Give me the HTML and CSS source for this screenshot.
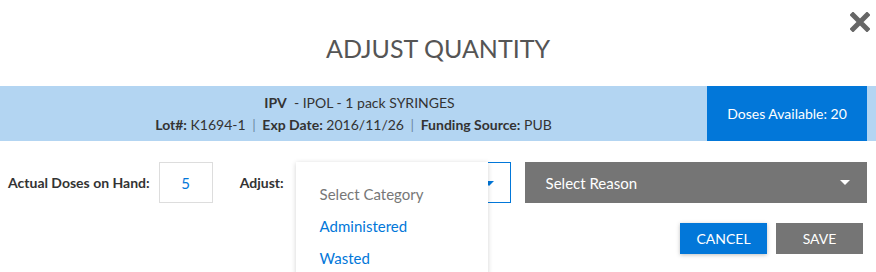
FILE: index.html
```html
<!DOCTYPE html>
<html lang="en">
<head>
  <meta charset="UTF-8">
  <meta name="viewport" content="width=device-width, initial-scale=1.0">
  <title>Adjust Quantity</title>
  <link rel="stylesheet" href="styles.css">
</head>
<body>
  <div class="modal">
    <header class="modal-header">
      <h1 class="modal-title">ADJUST QUANTITY</h1>
      <button class="close-button" aria-label="Close">
        <svg width="20" height="20" viewBox="0 0 20 20">
          <path d="M3 3 L17 17 M17 3 L3 17" stroke="#666" stroke-width="5" stroke-linecap="square"/>
        </svg>
      </button>
    </header>

    <div class="info-band">
      <div class="info-text">
        <div class="info-line first"><b>IPV</b>&nbsp; - IPOL - 1 pack SYRINGES</div>
        <div class="info-line">
          <b>Lot#:</b> K1694-1 <span class="sep">|</span>
          <b>Exp Date:</b> 2016/11/26 <span class="sep">|</span>
          <b>Funding Source:</b> PUB
        </div>
      </div>
      <div class="doses-box">Doses Available: 20</div>
    </div>

    <div class="form-row">
      <label class="field-label">Actual Doses on Hand:</label>
      <div class="qty-input">5</div>
      <label class="field-label adjust-label">Adjust:</label>
      <div class="category-select">
        <span class="caret caret-blue"></span>
        <ul class="dropdown-menu">
          <li class="dropdown-item placeholder">Select Category</li>
          <li class="dropdown-item">Administered</li>
          <li class="dropdown-item">Wasted</li>
        </ul>
      </div>
      <div class="reason-select">
        <span>Select Reason</span>
        <span class="caret"></span>
      </div>
    </div>

    <div class="actions">
      <button class="btn btn-primary">CANCEL</button>
      <button class="btn btn-gray">SAVE</button>
    </div>
  </div>
</body>
</html>
```

FILE: styles.css
```css
:root {
  --blue: #0277d9;
  --blue-light: #b3d5f2;
  --gray: #757575;
  --text-primary: #333333;
  --text-title: #555555;
  --border-light: #dddddd;
}

* {
  margin: 0;
  padding: 0;
  box-sizing: border-box;
  font-family: Lato, "Open Sans", sans-serif;
}

body {
  background: #ffffff;
  color: var(--text-primary);
  overflow: hidden;
}

.modal {
  width: 876px;
  height: 272px;
}

.modal-header {
  position: relative;
  padding: 35px 0 25px;
  text-align: center;
}

.modal-title {
  font-size: 25px;
  font-weight: 400;
  line-height: 26px;
  color: var(--text-title);
}

.close-button {
  position: absolute;
  top: 12px;
  right: 6px;
  width: 20px;
  height: 20px;
  border: none;
  background: none;
  cursor: pointer;
}

.close-button svg {
  display: block;
}

.info-band {
  display: flex;
  height: 55px;
  background: var(--blue-light);
  padding-right: 9px;
}

.info-text {
  flex: 1;
  display: flex;
  flex-direction: column;
  justify-content: center;
  align-items: center;
  font-size: 14px;
}

.info-line {
  line-height: 22px;
}

.info-line.first {
  padding-left: 12px;
}

.sep {
  color: #6d8aa3;
  margin: 0 3px;
}

.doses-box {
  width: 160px;
  background: var(--blue);
  color: #ffffff;
  font-size: 14px;
  display: flex;
  align-items: center;
  justify-content: center;
}

.form-row {
  display: flex;
  align-items: center;
  padding: 21px 9px 0 8px;
}

.field-label {
  font-size: 14px;
  font-weight: 700;
  margin-right: 9px;
}

.adjust-label {
  margin-right: 12px;
}

.qty-input {
  width: 54px;
  height: 41px;
  border: 1px solid var(--border-light);
  color: var(--blue);
  font-size: 15px;
  display: flex;
  align-items: center;
  justify-content: center;
  margin-right: 27px;
}

.category-select {
  position: relative;
  width: 215px;
  height: 41px;
  border: 1px solid var(--blue);
  margin-right: 14px;
}

.caret {
  width: 0;
  height: 0;
  border-left: 5px solid transparent;
  border-right: 5px solid transparent;
  border-top: 5px solid #ffffff;
}

.caret-blue {
  position: absolute;
  right: 16px;
  top: 18px;
  border-top-color: var(--blue);
}

.dropdown-menu {
  position: absolute;
  top: -1px;
  left: -1px;
  width: 192px;
  height: 112px;
  background: #ffffff;
  list-style: none;
  padding-top: 16px;
  box-shadow: 0 1px 5px rgba(0, 0, 0, 0.18);
  overflow: hidden;
}

.dropdown-item {
  height: 32px;
  line-height: 32px;
  padding-left: 24px;
  font-size: 15px;
  color: var(--blue);
}

.dropdown-item.placeholder {
  color: #777777;
}

.reason-select {
  flex: 1;
  height: 41px;
  background: var(--gray);
  color: #ffffff;
  font-size: 15px;
  display: flex;
  align-items: center;
  justify-content: space-between;
  padding: 0 17px 0 21px;
}

.actions {
  display: flex;
  justify-content: flex-end;
  gap: 9px;
  padding: 20px 13px 0 0;
}

.btn {
  width: 87px;
  height: 31px;
  border: none;
  color: #ffffff;
  font-size: 14px;
  cursor: pointer;
}

.btn-primary {
  background: var(--blue);
  box-shadow: 0 1px 4px rgba(0, 0, 0, 0.25);
}

.btn-gray {
  background: var(--gray);
}
```
